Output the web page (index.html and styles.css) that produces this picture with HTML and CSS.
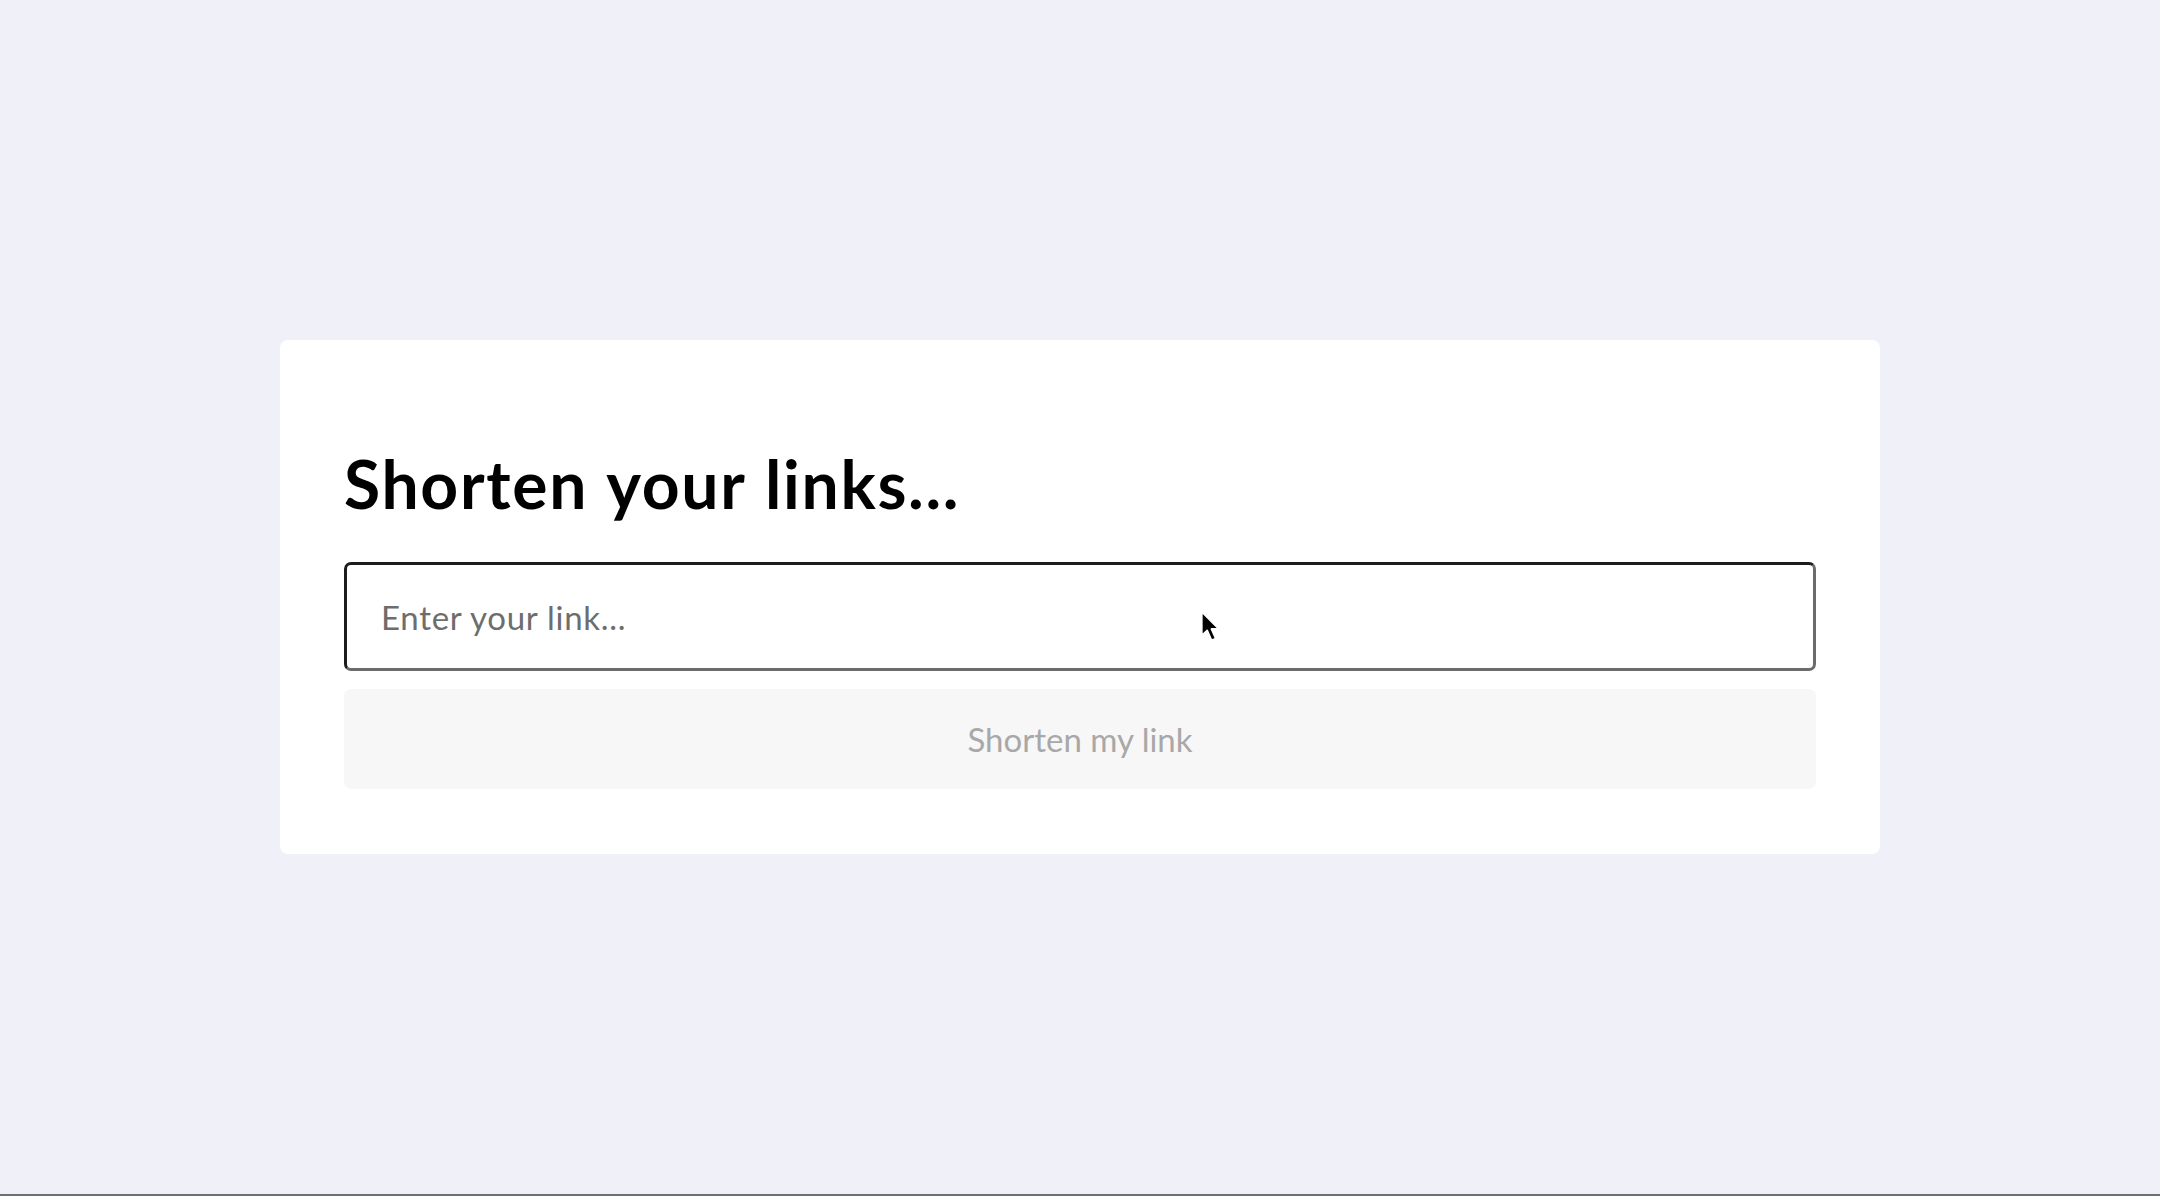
FILE: index.html
```html
<!DOCTYPE html>
<html lang="en">
<head>
<meta charset="utf-8">
<title>Shorten your links</title>
<link rel="stylesheet" href="styles.css">
</head>
<body>
<div class="page">
  <main class="stage">
    <section class="card">
      <h1 class="title">Shorten your links...</h1>
      <form class="form">
        <input class="link-input" type="text" placeholder="Enter your link...">
        <button class="submit" type="button" disabled>Shorten my link</button>
      </form>
    </section>
  </main>
  <div class="bottom-bar"></div>
</div>
<svg class="cursor" width="24" height="34" viewBox="0 0 20 28" aria-hidden="true">
  <path d="M1.5 1.5 L1.5 21 L6 16.8 L9.6 25 L13 23.5 L9.5 15.6 L15.6 15.6 Z" fill="#000" stroke="#fff" stroke-width="1.4" stroke-linejoin="round"/>
</svg>
</body>
</html>
```
FILE: styles.css
```css
* { box-sizing: border-box; }
html, body {
  margin: 0;
  padding: 0;
  height: 100%;
}
body {
  background: #f0f0f9;
  font-family: Lato, "Open Sans", sans-serif;
  position: relative;
  overflow: hidden;
}
.page {
  height: 100vh;
  display: flex;
  flex-direction: column;
}
.stage {
  flex: 1;
  display: flex;
  align-items: center;
  justify-content: center;
}
.bottom-bar {
  height: 2px;
  background: #6e6e6e;
}
.card {
  width: 1600px;
  background: #ffffff;
  border-radius: 8px;
  padding: 64px 64px 65px;
}
.title {
  margin: 40px 0 39px;
  font-size: 66px;
  line-height: 1.2;
  font-weight: 700;
  color: #000;
  letter-spacing: 1.7px;
  word-spacing: 2px;
}
.form {
  display: flex;
  flex-direction: column;
  gap: 18px;
}
.link-input {
  height: 109px;
  width: 100%;
  border-style: solid;
  border-width: 3px;
  border-color: #1c1c1c #6b6b6b #6b6b6b #1c1c1c;
  border-radius: 7px;
  padding: 0 34px;
  font-family: Lato, "Open Sans", sans-serif;
  font-size: 33px;
  letter-spacing: 0.7px;
  color: #222;
  background: #fff;
  outline: none;
}
.link-input::placeholder {
  color: #6d6d6d;
}
.submit {
  height: 100px;
  width: 100%;
  border: none;
  border-radius: 7px;
  background: #f7f7f7;
  color: #a8a8a8;
  font-family: Lato, "Open Sans", sans-serif;
  font-size: 33px;
  cursor: default;
}
.cursor {
  position: absolute;
  left: 1200px;
  top: 610px;
}
```
